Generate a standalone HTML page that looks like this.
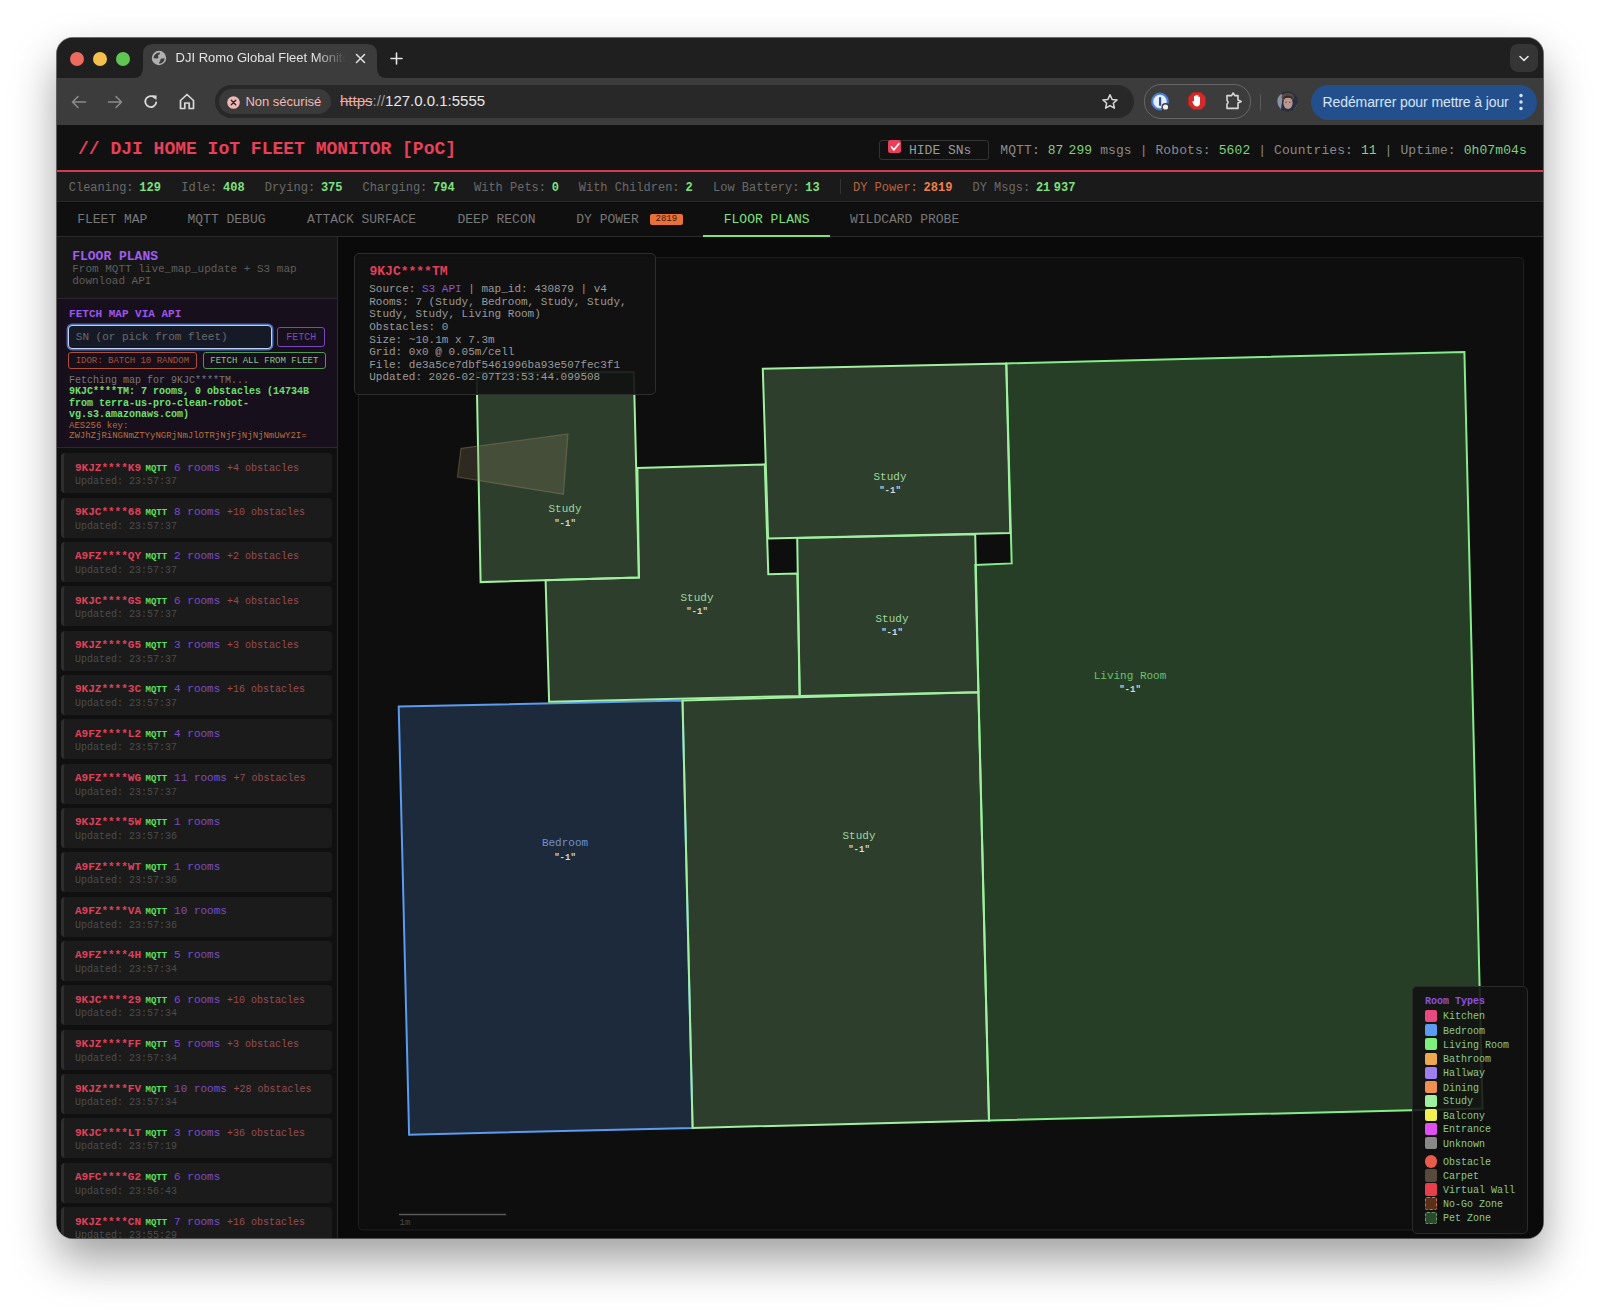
<!DOCTYPE html>
<html><head><meta charset="utf-8">
<style>
*{box-sizing:border-box;margin:0;padding:0}
html,body{width:1600px;height:1313px;overflow:hidden;background:#fff}
body{position:relative;font-family:"Liberation Sans",sans-serif}
.abs{position:absolute}
#win{position:absolute;left:57px;top:38px;width:1486px;height:1200px;border-radius:16px;overflow:hidden;background:#0a0a0a;box-shadow:0 22px 45px rgba(0,0,0,0.38),0 0 0 1px rgba(0,0,0,0.55)}
#shadowL{position:absolute;left:57px;top:38px;width:1486px;height:1200px;border-radius:14px}
.mono{font-family:"Liberation Mono",monospace}
/* chrome */
#tabstrip{position:absolute;left:0;top:0;width:1486px;height:40px;background:#1f1f1f}
.light{position:absolute;top:13.75px;width:14px;height:14px;border-radius:50%}
#tab{position:absolute;left:86px;top:6px;width:234px;height:40px;background:#3c3c3c;border-radius:10px 10px 0 0}
#toolbar{position:absolute;left:0;top:40px;width:1486px;height:47px;background:#3c3c3c}
#omni{position:absolute;left:157.5px;top:7px;width:919px;height:33px;border-radius:17px;background:#282828}
#content{position:absolute;left:0;top:87px;width:1486px;height:1113px;background:#0a0a0a;font-family:"Liberation Mono",monospace}
#hdr{position:absolute;left:0;top:0;width:1486px;height:45px;background:#111}
#redline{position:absolute;left:0;top:45px;width:1486px;height:2px;background:#d83a52}
#stats{position:absolute;left:0;top:47px;width:1486px;height:30px;background:#1a1a1a;border-bottom:1px solid #2a2a2a}
#tabs{position:absolute;left:0;top:78px;width:1486px;height:34px;background:#0f0f0f;border-bottom:1px solid #2a2a2a}
.st{position:absolute;top:8.2px;font-size:12px;line-height:16px;color:#6a6a6a;white-space:pre}
.st b{color:#7ee07e;margin-left:5.8px}
.tb{position:absolute;top:8px;font-size:13px;line-height:17px;color:#777;white-space:pre}

#main{position:absolute;left:0;top:112px;width:1486px;height:1001px;background:#0a0a0a}
#side{position:absolute;left:0;top:0;width:281px;height:1001px;background:#101010;border-right:1px solid #2a2a2a;overflow:hidden}
.it{position:absolute;left:4.3px;width:271px;height:40px;background:#1b1b1b;border-left:3px solid #2e2e2e;border-radius:4px}
.it .l1{position:absolute;left:10.7px;top:8.5px;font-size:11px;line-height:12.5px;white-space:pre;color:#8a55d0}
.it .sn{color:#e0405a;font-weight:bold}
.it .mq{color:#5ee05e;font-weight:bold;font-size:9px;margin-left:4.5px;margin-right:7px}
.it .rm{color:#7c4cc8}
.it .ob{color:#9a4c50;font-size:10px}
.it .l2{position:absolute;left:10.7px;top:23px;font-size:10px;line-height:11.5px;white-space:pre;color:#4c4c4c}
</style></head><body>
<div id="win">

  <div id="tabstrip">
    <div class="light" style="left:12.6px;background:#ec6a5e"></div>
    <div class="light" style="left:36px;background:#f4bf4f"></div>
    <div class="light" style="left:58.8px;background:#61c554"></div>
    <svg class="abs" style="left:76px;top:6px" width="254" height="34" viewBox="0 0 254 34">
      <path d="M0 34 Q10 34 10 24 L10 10 Q10 0 20 0 L234 0 Q244 0 244 10 L244 24 Q244 34 254 34 Z" fill="#3c3c3c"/>
    </svg>
    <svg class="abs" style="left:94.15px;top:12px" width="16" height="16" viewBox="0 0 16 16">
      <circle cx="8" cy="8" r="7.2" fill="#b0b0b0"/>
      <path d="M8.6 2.4 C5.4 2.5 2.8 5 2.5 8.3 L6.2 8.6 C7.4 8.5 7.6 7.3 7.1 6.3 C6.7 5.4 7.4 4.7 8.2 4.4 C9 4 9.2 3 8.6 2.4 Z" fill="#3c3c3c"/>
      <path d="M13.6 8.2 C13.5 11.2 11.2 13.5 8.2 13.6 C7.6 12.9 8.2 12.1 8.9 11.6 C9.6 11 9.2 10.2 9.4 9.5 C9.7 8.7 10.5 8.4 11.4 8.4 Z" fill="#3c3c3c"/>
    </svg>
    <div class="abs" style="left:118.6px;top:12px;font-size:13px;line-height:16px;color:#e3e3e3;white-space:nowrap;width:170px;overflow:hidden;-webkit-mask-image:linear-gradient(90deg,#000 82%,transparent 100%)">DJI Romo Global Fleet Monitor</div>
    <svg class="abs" style="left:298.2px;top:15px" width="11" height="11" viewBox="0 0 11 11"><path d="M1.5 1.5 L9.5 9.5 M9.5 1.5 L1.5 9.5" stroke="#e3e3e3" stroke-width="1.5" stroke-linecap="round"/></svg>
    <svg class="abs" style="left:333.3px;top:14px" width="13" height="13" viewBox="0 0 13 13"><path d="M6.5 1 L6.5 12 M1 6.5 L12 6.5" stroke="#e3e3e3" stroke-width="1.6" stroke-linecap="round"/></svg>
    <div class="abs" style="left:1452.5px;top:6px;width:28px;height:28px;border-radius:8px;background:#353535"></div>
    <svg class="abs" style="left:1460.5px;top:14px" width="12" height="12" viewBox="0 0 12 12"><path d="M2 4.5 L6 8.5 L10 4.5" fill="none" stroke="#e3e3e3" stroke-width="1.6" stroke-linecap="round" stroke-linejoin="round"/></svg>
  </div>
  <div id="toolbar">
    <svg class="abs" style="left:13px;top:15px" width="18" height="18" viewBox="0 0 18 18"><path d="M15.5 9 L2.5 9 M8 3.5 L2.5 9 L8 14.5" fill="none" stroke="#8a8a8a" stroke-width="1.6" stroke-linecap="round" stroke-linejoin="round"/></svg>
    <svg class="abs" style="left:48.7px;top:15px" width="18" height="18" viewBox="0 0 18 18"><path d="M2.5 9 L15.5 9 M10 3.5 L15.5 9 L10 14.5" fill="none" stroke="#8a8a8a" stroke-width="1.6" stroke-linecap="round" stroke-linejoin="round"/></svg>
    <svg class="abs" style="left:85px;top:15px" width="18" height="18" viewBox="0 0 18 18"><path d="M14.2 9.5 A5.5 5.5 0 1 1 12.6 4.6" fill="none" stroke="#d8d8d8" stroke-width="1.8" stroke-linecap="round"/><path d="M9.8 2.2 L14.6 2.4 L14.4 7.2 Z" fill="#d8d8d8"/></svg>
    <svg class="abs" style="left:121px;top:14px" width="18" height="19" viewBox="0 0 18 19"><path d="M2.5 8.5 L9 2.5 L15.5 8.5 L15.5 16.5 L11.2 16.5 L11.2 11 L6.8 11 L6.8 16.5 L2.5 16.5 Z" fill="none" stroke="#d8d8d8" stroke-width="1.7" stroke-linejoin="round"/></svg>
    <div id="omni">
      <div class="abs" style="left:4.5px;top:4px;width:112px;height:24.5px;border-radius:12.5px;background:#3a3a3a"></div>
      <svg class="abs" style="left:12.4px;top:10.5px" width="13" height="13" viewBox="0 0 13 13"><circle cx="6.5" cy="6.5" r="6.3" fill="#f2b8b5"/><path d="M4.3 4.3 L8.7 8.7 M8.7 4.3 L4.3 8.7" stroke="#3a2a2a" stroke-width="1.5" stroke-linecap="round"/></svg>
      <div class="abs" style="left:30.9px;top:8.5px;font-size:13px;line-height:16px;color:#f2b8b5;white-space:nowrap">Non sécurisé</div>
      <div class="abs" style="left:125.5px;top:7px;font-size:15px;line-height:18px;color:#e6e6e6;white-space:nowrap"><span style="color:#e8aaa6;text-decoration:line-through">https</span><span style="color:#9a9a9a">://</span>127.0.0.1:5555</div>
      <svg class="abs" style="left:886.5px;top:7.5px" width="18" height="18" viewBox="0 0 18 18"><path d="M9 1.8 L11.1 6.4 L16.1 6.9 L12.3 10.2 L13.4 15.2 L9 12.6 L4.6 15.2 L5.7 10.2 L1.9 6.9 L6.9 6.4 Z" fill="none" stroke="#d8d8d8" stroke-width="1.5" stroke-linejoin="round"/></svg>
    </div>
    <div class="abs" style="left:1086.5px;top:6.4px;width:107px;height:34.3px;border-radius:17px;border:1.3px solid #676767"></div>
    <svg class="abs" style="left:1094px;top:14px" width="20" height="20" viewBox="0 0 20 20"><circle cx="9" cy="9.5" r="7.8" fill="#e6eefc" stroke="#4a7fd8" stroke-width="2.2"/><rect x="8" y="5" width="2.2" height="9" rx="1" fill="#2a4f9a"/><circle cx="14.5" cy="15" r="4" fill="#3c3c3c"/><circle cx="14.5" cy="15" r="2.6" fill="#f0f0f0"/></svg>
    <svg class="abs" style="left:1130px;top:13px" width="20" height="20" viewBox="0 0 20 20"><path d="M6 1.5 L14 1.5 L18.5 6 L18.5 14 L14 18.5 L6 18.5 L1.5 14 L1.5 6 Z" fill="#d22b2b" stroke="#b82020" stroke-width="1"/><path d="M7 10 L7 5.2 Q7.8 4.6 8.5 5.2 L8.5 9 L8.5 4.2 Q9.3 3.6 10 4.2 L10 9 L10 4.6 Q10.8 4 11.5 4.6 L11.5 9.3 L11.5 6 Q12.3 5.4 13 6 L13 11.5 Q13 15.5 9.8 15.5 Q7.8 15.5 6.6 13.5 L5.2 10.8 Q5.6 9.8 6.5 10.4 Z" fill="#fff"/></svg>
    <svg class="abs" style="left:1167px;top:13px" width="20" height="20" viewBox="0 0 20 20"><path d="M3 4.6 L7.6 4.6 L9.2 2 L10.8 4.6 L14 4.6 L14 9 L17.2 10.5 L14 12 L14 17.4 L3 17.4 L3 13 Q5.2 11.2 3 9.4 Z" fill="none" stroke="#d8d8d8" stroke-width="1.6" stroke-linejoin="round"/></svg>
    <div class="abs" style="left:1202.5px;top:16px;width:1.3px;height:16px;background:#5a5a5a"></div>
    <svg class="abs" style="left:1220px;top:13.4px" width="21" height="21" viewBox="0 0 21 21">
      <defs><clipPath id="avc"><circle cx="10.5" cy="10.5" r="10.2"/></clipPath></defs>
      <g clip-path="url(#avc)">
        <rect width="21" height="21" fill="#2a2e3e"/>
        <path d="M0 6 Q3 2 6 4 L4 18 L0 16 Z" fill="#8a92a8"/>
        <path d="M21 12 L16 20 L21 21 Z" fill="#6a7a90"/>
        <ellipse cx="10.8" cy="6.2" rx="6.2" ry="4.2" fill="#5a4a44"/>
        <ellipse cx="11" cy="12" rx="4.6" ry="6" fill="#b89890"/>
        <path d="M6.5 8 Q11 5.5 15.5 8 L15.5 6 Q11 3 6.5 6 Z" fill="#3a2a26"/>
        <rect x="8.2" y="10.8" width="1.6" height="0.9" fill="#6a4030"/>
        <rect x="12" y="10.8" width="1.6" height="0.9" fill="#6a4030"/>
      </g>
    </svg>
    <div class="abs" style="left:1254px;top:6.7px;width:226px;height:35px;border-radius:17.5px;background:#23508c"></div>
    <div class="abs" style="left:1265.5px;top:15.5px;font-size:14px;line-height:17px;color:#d6e4fb;white-space:nowrap;letter-spacing:-0.1px">Redémarrer pour mettre à jour</div>
    <svg class="abs" style="left:1461px;top:14px" width="6" height="20" viewBox="0 0 6 20"><circle cx="3" cy="3.5" r="1.7" fill="#d6e4fb"/><circle cx="3" cy="10" r="1.7" fill="#d6e4fb"/><circle cx="3" cy="16.5" r="1.7" fill="#d6e4fb"/></svg>
  </div>
  <div id="content">
    <div id="hdr">
      <div class="abs" style="left:21px;top:13px;font-size:18px;line-height:22px;font-weight:bold;color:#e8405a;white-space:pre">// DJI HOME IoT FLEET MONITOR [PoC]</div>

      <div class="abs" style="left:822.3px;top:14.5px;width:109.3px;height:20.5px;border:1px solid #333;border-radius:3px"></div>
      <div class="abs" style="left:830.5px;top:15.3px;width:13.5px;height:12.5px;border-radius:2.5px;background:#e8405a"></div>
      <svg class="abs" style="left:831.5px;top:15.8px" width="12" height="12" viewBox="0 0 12 12"><path d="M2.5 6 L5 8.8 L9.8 2.8" fill="none" stroke="#fff" stroke-width="1.8" stroke-linecap="round" stroke-linejoin="round"/></svg>
      <div class="abs" style="left:852px;top:17.3px;font-size:13px;line-height:17px;color:#9a9a9a;white-space:pre">HIDE SNs</div>
      <div class="abs" style="left:943.3px;top:16.8px;font-size:13px;line-height:17px;color:#8a8a8a;white-space:pre;letter-spacing:0.1px">MQTT: <span style="color:#7fd07f">87<span style="display:inline-block;width:5px"></span>299</span> msgs | Robots: <span style="color:#7fd07f">5602</span> | Countries: <span style="color:#7fd07f">11</span> | Uptime: <span style="color:#7fd07f">0h07m04s</span></div>
    </div>
    <div id="redline"></div>
    <div id="stats">
      <div class="st" style="left:11.75px">Cleaning:<b>129</b></div>
      <div class="st" style="left:124.25px">Idle:<b>408</b></div>
      <div class="st" style="left:207.7px">Drying:<b>375</b></div>
      <div class="st" style="left:305.5px">Charging:<b>794</b></div>
      <div class="st" style="left:417px">With Pets:<b>0</b></div>
      <div class="st" style="left:521.75px">With Children:<b>2</b></div>
      <div class="st" style="left:656px">Low Battery:<b>13</b></div>

      <div class="abs" style="left:782.5px;top:7px;width:1px;height:15px;background:#333"></div>
      <div class="st" style="left:796px;color:#b8643a">DY Power:<b style="color:#f0804a">2819</b></div>
      <div class="st" style="left:915.5px">DY Msgs:<b>21<span style="display:inline-block;width:3.5px"></span>937</b></div>
    </div>
    <div id="tabs">
      <div class="tb" style="left:20.2px">FLEET MAP</div>
      <div class="tb" style="left:130.5px">MQTT DEBUG</div>
      <div class="tb" style="left:249.9px">ATTACK SURFACE</div>
      <div class="tb" style="left:400.5px">DEEP RECON</div>
      <div class="tb" style="left:519.3px">DY POWER</div>
      <div class="tb" style="left:666.75px;color:#7ee07e">FLOOR PLANS</div>
      <div class="tb" style="left:793px">WILDCARD PROBE</div>

      <div class="abs" style="left:593px;top:11.2px;width:32.6px;height:11px;border-radius:2px;background:#e8703a;font-size:9px;line-height:11px;color:#3a1a0a;text-align:center">2819</div>
      <div class="abs" style="left:646px;top:31.5px;width:127px;height:2.5px;background:#7ee07e"></div>
    </div>
    <div id="main">

    <div id="side"><div class="abs" style="left:0;top:-112px;width:281px">
      <div class="abs" style="left:0;top:112px;width:280px;height:60.6px;background:#161616"></div>
      <div class="abs" style="left:15.2px;top:123.5px;font-size:13px;line-height:15px;font-weight:bold;color:#a35cf0;white-space:pre">FLOOR PLANS</div>
      <div class="abs" style="left:15.2px;top:137.5px;width:240px;font-size:11px;line-height:12.3px;color:#5e5e5e">From MQTT live_map_update + S3 map download API</div>
      <div class="abs" style="left:0;top:172.6px;width:280px;height:1px;background:#2c2630"></div>
      <div class="abs" style="left:0;top:173.6px;width:280px;height:148px;background:#170f1b"></div>
      <div class="abs" style="left:12.1px;top:182.5px;font-size:11px;line-height:13px;font-weight:bold;color:#9d55ec;white-space:pre">FETCH MAP VIA API</div>
      <div class="abs" style="left:10.7px;top:199.9px;width:204px;height:24px;border-radius:4px;background:#161a26;border:1.6px solid #c0d2f4;box-shadow:0 0 0 1.4px #4a70c0"></div>
      <div class="abs" style="left:18.8px;top:206px;font-size:11px;line-height:13px;color:#6a6a6a;white-space:pre">SN (or pick from fleet)</div>
      <div class="abs" style="left:220px;top:202.3px;width:48.4px;height:19.4px;border-radius:3px;border:1px solid #7a45c0;font-size:10px;line-height:20px;color:#7650b8;text-align:center">FETCH</div>
      <div class="abs" style="left:11px;top:227.3px;width:128.7px;height:16.6px;border-radius:3px;border:1px solid #b0502e;font-size:9px;line-height:16.4px;color:#a8553a;text-align:center;white-space:pre">IDOR: BATCH 10 RANDOM</div>
      <div class="abs" style="left:145.7px;top:227.3px;width:123.3px;height:16.6px;border-radius:3px;border:1px solid #4e9a4e;font-size:9px;line-height:16.4px;color:#88c888;text-align:center;white-space:pre">FETCH ALL FROM FLEET</div>
      <div class="abs" style="left:12px;top:249.5px;font-size:10px;line-height:11.5px;color:#777;white-space:pre">Fetching map for 9KJC****TM...</div>
      <div class="abs" style="left:12px;top:260.8px;width:260px;font-size:10px;line-height:11.75px;font-weight:bold;color:#6ee06e">9KJC****TM: 7 rooms, 0 obstacles (14734B from terra-us-pro-clean-robot-<br>vg.s3.amazonaws.com)</div>
      <div class="abs" style="left:12px;top:297.3px;width:265px;font-size:9px;line-height:9.9px;color:#b8703a;word-break:break-all">AES256 key:<br>ZWJhZjRiNGNmZTYyNGRjNmJlOTRjNjFjNjNjNmUwY2I=</div>
      <div class="abs" style="left:0;top:321.6px;width:280px;height:1px;background:#2c2630"></div>
      <div class="it" style="top:328.2px"><div class="l1"><span class="sn">9KJZ****K9</span><span class="mq">MQTT</span><span class="rm">6 rooms</span> <span class="ob">+4 obstacles</span></div><div class="l2">Updated: 23:57:37</div></div>
      <div class="it" style="top:372.5px"><div class="l1"><span class="sn">9KJC****68</span><span class="mq">MQTT</span><span class="rm">8 rooms</span> <span class="ob">+10 obstacles</span></div><div class="l2">Updated: 23:57:37</div></div>
      <div class="it" style="top:416.9px"><div class="l1"><span class="sn">A9FZ****QY</span><span class="mq">MQTT</span><span class="rm">2 rooms</span> <span class="ob">+2 obstacles</span></div><div class="l2">Updated: 23:57:37</div></div>
      <div class="it" style="top:461.2px"><div class="l1"><span class="sn">9KJC****GS</span><span class="mq">MQTT</span><span class="rm">6 rooms</span> <span class="ob">+4 obstacles</span></div><div class="l2">Updated: 23:57:37</div></div>
      <div class="it" style="top:505.6px"><div class="l1"><span class="sn">9KJZ****G5</span><span class="mq">MQTT</span><span class="rm">3 rooms</span> <span class="ob">+3 obstacles</span></div><div class="l2">Updated: 23:57:37</div></div>
      <div class="it" style="top:549.9px"><div class="l1"><span class="sn">9KJZ****3C</span><span class="mq">MQTT</span><span class="rm">4 rooms</span> <span class="ob">+16 obstacles</span></div><div class="l2">Updated: 23:57:37</div></div>
      <div class="it" style="top:594.2px"><div class="l1"><span class="sn">A9FZ****L2</span><span class="mq">MQTT</span><span class="rm">4 rooms</span></div><div class="l2">Updated: 23:57:37</div></div>
      <div class="it" style="top:638.6px"><div class="l1"><span class="sn">A9FZ****WG</span><span class="mq">MQTT</span><span class="rm">11 rooms</span> <span class="ob">+7 obstacles</span></div><div class="l2">Updated: 23:57:37</div></div>
      <div class="it" style="top:682.9px"><div class="l1"><span class="sn">9KJZ****5W</span><span class="mq">MQTT</span><span class="rm">1 rooms</span></div><div class="l2">Updated: 23:57:36</div></div>
      <div class="it" style="top:727.3px"><div class="l1"><span class="sn">A9FZ****WT</span><span class="mq">MQTT</span><span class="rm">1 rooms</span></div><div class="l2">Updated: 23:57:36</div></div>
      <div class="it" style="top:771.6px"><div class="l1"><span class="sn">A9FZ****VA</span><span class="mq">MQTT</span><span class="rm">10 rooms</span></div><div class="l2">Updated: 23:57:36</div></div>
      <div class="it" style="top:815.9px"><div class="l1"><span class="sn">A9FZ****4H</span><span class="mq">MQTT</span><span class="rm">5 rooms</span></div><div class="l2">Updated: 23:57:34</div></div>
      <div class="it" style="top:860.3px"><div class="l1"><span class="sn">9KJC****29</span><span class="mq">MQTT</span><span class="rm">6 rooms</span> <span class="ob">+10 obstacles</span></div><div class="l2">Updated: 23:57:34</div></div>
      <div class="it" style="top:904.6px"><div class="l1"><span class="sn">9KJZ****FF</span><span class="mq">MQTT</span><span class="rm">5 rooms</span> <span class="ob">+3 obstacles</span></div><div class="l2">Updated: 23:57:34</div></div>
      <div class="it" style="top:949.0px"><div class="l1"><span class="sn">9KJZ****FV</span><span class="mq">MQTT</span><span class="rm">10 rooms</span> <span class="ob">+28 obstacles</span></div><div class="l2">Updated: 23:57:34</div></div>
      <div class="it" style="top:993.3px"><div class="l1"><span class="sn">9KJC****LT</span><span class="mq">MQTT</span><span class="rm">3 rooms</span> <span class="ob">+36 obstacles</span></div><div class="l2">Updated: 23:57:19</div></div>
      <div class="it" style="top:1037.6px"><div class="l1"><span class="sn">A9FC****G2</span><span class="mq">MQTT</span><span class="rm">6 rooms</span></div><div class="l2">Updated: 23:56:43</div></div>
      <div class="it" style="top:1082.0px"><div class="l1"><span class="sn">9KJZ****CN</span><span class="mq">MQTT</span><span class="rm">7 rooms</span> <span class="ob">+16 obstacles</span></div><div class="l2">Updated: 23:55:29</div></div>
    </div></div>
    <div id="map" class="abs" style="left:0;top:0;width:1486px;height:1001px">

    <svg class="abs" style="left:281px;top:0" width="1205" height="1001" viewBox="338 237 1205 1001" font-family="Liberation Mono, monospace">
      <rect x="358.5" y="257.5" width="1165" height="972.5" rx="4" fill="#0e0e0e" stroke="#1f1f1f" stroke-width="1"/>

      <polygon points="398.7,706.6 682.5,700.6 692.6,1127.9 409.1,1134.7" fill="rgba(91,155,240,0.2)" stroke="#5b9bf0" stroke-width="2" stroke-linejoin="miter"/>
      <polygon points="1006.3,363.4 1464.4,351.9 1482.5,1108.5 989,1120.5 975.3,565 1011.7,563.4" fill="rgba(126,240,126,0.21)" stroke="#86ec8a" stroke-width="2"/>
      <polygon points="682.5,700.6 978.4,692.2 989,1120.5 692.6,1127.9" fill="rgba(160,240,160,0.21)" stroke="#a0f0a0" stroke-width="2"/>
      <polygon points="545.6,580.2 638.9,577.5 637.4,467.9 764.8,464.4 768.3,574.3 797.3,573.6 799.7,696 549.1,701.7" fill="rgba(160,240,160,0.21)" stroke="#a0f0a0" stroke-width="2"/>
      <polygon points="797.2,538 975.2,534.3 978.4,692.2 799.7,696" fill="rgba(160,240,160,0.21)" stroke="#a0f0a0" stroke-width="2"/>
      <polygon points="762.8,368.7 1006.3,363.4 1010.3,533.1 768.1,538.6" fill="rgba(160,240,160,0.21)" stroke="#a0f0a0" stroke-width="2"/>
      <polygon points="476.6,372.8 633.8,371.9 638.9,577.5 480.6,582.1" fill="rgba(160,240,160,0.21)" stroke="#a0f0a0" stroke-width="2"/>
      <polygon points="461,448.3 568,434 563.4,494.4 457.4,477" fill="rgba(142,126,94,0.25)" stroke="rgba(170,150,110,0.35)" stroke-width="1.2"/>
      <text x="565" y="512.1999999999999" fill="#9ed89e" font-size="11" text-anchor="middle">Study</text>
      <text x="565" y="525.6999999999999" fill="#d8d8d8" font-size="9" font-weight="bold" text-anchor="middle">"-1"</text>
      <text x="697" y="600.8" fill="#9ed89e" font-size="11" text-anchor="middle">Study</text>
      <text x="697" y="614.3" fill="#d8d8d8" font-size="9" font-weight="bold" text-anchor="middle">"-1"</text>
      <text x="890" y="479.8" fill="#9ed89e" font-size="11" text-anchor="middle">Study</text>
      <text x="890" y="493.3" fill="#d8d8d8" font-size="9" font-weight="bold" text-anchor="middle">"-1"</text>
      <text x="892" y="621.8" fill="#9ed89e" font-size="11" text-anchor="middle">Study</text>
      <text x="892" y="635.3" fill="#d8d8d8" font-size="9" font-weight="bold" text-anchor="middle">"-1"</text>
      <text x="1130" y="678.8" fill="#6fc06f" font-size="11" text-anchor="middle">Living Room</text>
      <text x="1130" y="692.3" fill="#d8d8d8" font-size="9" font-weight="bold" text-anchor="middle">"-1"</text>
      <text x="565" y="846.3" fill="#7090c8" font-size="11" text-anchor="middle">Bedroom</text>
      <text x="565" y="859.8" fill="#d8d8d8" font-size="9" font-weight="bold" text-anchor="middle">"-1"</text>
      <text x="859" y="838.8" fill="#9ed89e" font-size="11" text-anchor="middle">Study</text>
      <text x="859" y="852.3" fill="#d8d8d8" font-size="9" font-weight="bold" text-anchor="middle">"-1"</text>

      <line x1="399" y1="1214.4" x2="506" y2="1214.4" stroke="#5a5a5a" stroke-width="1.5"/>
      <text x="399.5" y="1225" fill="#4a4a4a" font-size="9">1m</text>
    </svg>
    <div class="abs" style="left:281px;top:0;width:1205px;height:1001px">
    <div class="abs" style="left:16px;top:16px;width:302.3px;height:141.5px;border:1px solid #2e2e2e;border-radius:5px;background:rgba(17,17,17,0.92)"></div>
    <div class="abs" style="left:31.5px;top:26.5px;font-size:13px;line-height:15px;font-weight:bold;color:#e0405a;white-space:pre">9KJC****TM</div>
    <div class="abs" style="left:31.2px;top:46.2px;width:270px;font-size:11px;line-height:12.6px;color:#9a9a9a">Source: <span style="color:#8a55d0">S3 API</span> | map_id: 430879 | v4<br>Rooms: 7 (Study, Bedroom, Study, Study, Study, Study, Living Room)<br>Obstacles: 0<br>Size: ~10.1m x 7.3m<br>Grid: 0x0 @ 0.05m/cell<br>File: de3a5ce7dbf5461996ba93e507fec3f1<br>Updated: 2026-02-07T23:53:44.099508</div>

    <div class="abs" style="left:1074.1px;top:749px;width:115.5px;height:247.5px;border:1px solid #2a2a2a;border-radius:5px;background:rgba(17,17,17,0.88)"></div>
    <div class="abs" style="left:1087px;top:758.8px;font-size:10px;line-height:11.5px;font-weight:bold;color:#9050e0;white-space:pre">Room Types</div>
    <div class="abs" style="left:1086.6px;top:772.8px;width:12.5px;height:12px;border-radius:2px;background:#e84a80"></div>
    <div class="abs" style="left:1105px;top:774.4px;font-size:10px;line-height:11.5px;color:#8cc88c;white-space:pre">Kitchen</div>
    <div class="abs" style="left:1086.6px;top:787.1px;width:12.5px;height:12px;border-radius:2px;background:#5b9bf0"></div>
    <div class="abs" style="left:1105px;top:788.7px;font-size:10px;line-height:11.5px;color:#8cc88c;white-space:pre">Bedroom</div>
    <div class="abs" style="left:1086.6px;top:801.4px;width:12.5px;height:12px;border-radius:2px;background:#7ef07e"></div>
    <div class="abs" style="left:1105px;top:803.0px;font-size:10px;line-height:11.5px;color:#8cc88c;white-space:pre">Living Room</div>
    <div class="abs" style="left:1086.6px;top:815.5px;width:12.5px;height:12px;border-radius:2px;background:#f0a850"></div>
    <div class="abs" style="left:1105px;top:817.1px;font-size:10px;line-height:11.5px;color:#8cc88c;white-space:pre">Bathroom</div>
    <div class="abs" style="left:1086.6px;top:829.8px;width:12.5px;height:12px;border-radius:2px;background:#a07ef0"></div>
    <div class="abs" style="left:1105px;top:831.4px;font-size:10px;line-height:11.5px;color:#8cc88c;white-space:pre">Hallway</div>
    <div class="abs" style="left:1086.6px;top:844.0px;width:12.5px;height:12px;border-radius:2px;background:#f09050"></div>
    <div class="abs" style="left:1105px;top:845.6px;font-size:10px;line-height:11.5px;color:#8cc88c;white-space:pre">Dining</div>
    <div class="abs" style="left:1086.6px;top:857.7px;width:12.5px;height:12px;border-radius:2px;background:#a0f0a0"></div>
    <div class="abs" style="left:1105px;top:859.3px;font-size:10px;line-height:11.5px;color:#8cc88c;white-space:pre">Study</div>
    <div class="abs" style="left:1086.6px;top:872.0px;width:12.5px;height:12px;border-radius:2px;background:#f0f050"></div>
    <div class="abs" style="left:1105px;top:873.6px;font-size:10px;line-height:11.5px;color:#8cc88c;white-space:pre">Balcony</div>
    <div class="abs" style="left:1086.6px;top:885.8px;width:12.5px;height:12px;border-radius:2px;background:#e050f0"></div>
    <div class="abs" style="left:1105px;top:887.4px;font-size:10px;line-height:11.5px;color:#8cc88c;white-space:pre">Entrance</div>
    <div class="abs" style="left:1086.6px;top:900.1px;width:12.5px;height:12px;border-radius:2px;background:#888888"></div>
    <div class="abs" style="left:1105px;top:901.7px;font-size:10px;line-height:11.5px;color:#8cc88c;white-space:pre">Unknown</div>
    <div class="abs" style="left:1086.6px;top:918.1px;width:12.5px;height:12.5px;border-radius:2px;border-radius:50%;background:#e85a4a"></div>
    <div class="abs" style="left:1105px;top:919.9px;font-size:10px;line-height:11.5px;color:#8cc88c;white-space:pre">Obstacle</div>
    <div class="abs" style="left:1086.6px;top:932.1px;width:12.5px;height:12.5px;border-radius:2px;background:#5a4a3c"></div>
    <div class="abs" style="left:1105px;top:933.9px;font-size:10px;line-height:11.5px;color:#8cc88c;white-space:pre">Carpet</div>
    <div class="abs" style="left:1086.6px;top:946.0px;width:12.5px;height:12.5px;border-radius:2px;background:#e8404a"></div>
    <div class="abs" style="left:1105px;top:947.8px;font-size:10px;line-height:11.5px;color:#8cc88c;white-space:pre">Virtual Wall</div>
    <div class="abs" style="left:1086.6px;top:960.3px;width:12.5px;height:12.5px;border-radius:2px;background:#5a3018;border:1px dashed #d07040"></div>
    <div class="abs" style="left:1105px;top:962.1px;font-size:10px;line-height:11.5px;color:#8cc88c;white-space:pre">No-Go Zone</div>
    <div class="abs" style="left:1086.6px;top:974.6px;width:12.5px;height:12.5px;border-radius:2px;background:#2a4a2e;border:1px dashed #6a9a6a"></div>
    <div class="abs" style="left:1105px;top:976.4px;font-size:10px;line-height:11.5px;color:#8cc88c;white-space:pre">Pet Zone</div>
    </div>
    </div>
    </div>
  </div>
</div>
</body></html>
